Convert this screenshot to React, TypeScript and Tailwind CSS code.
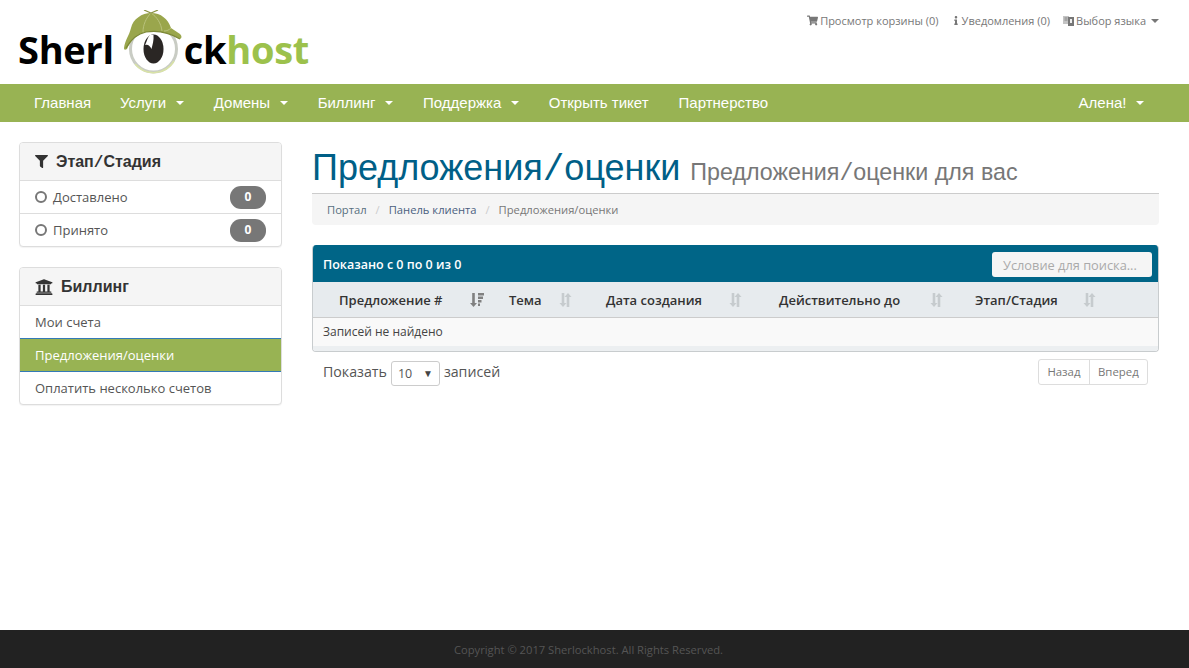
import { FaShoppingCart, FaFilter, FaUniversity, FaInfo } from "react-icons/fa";

const OPEN = "font-['Open_Sans',sans-serif]";
const ARIAL = "font-['Liberation_Sans',Arial,sans-serif]";

function Caret({ className }: { className: string }) {
  return <span className={`inline-block w-0 h-0 border-x-4 border-x-transparent border-t-4 ${className}`} />;
}

// the slash in the headings comes from a wider fallback font in the original
function Slash() {
  return <span className="font-['Liberation_Mono',monospace]">/</span>;
}

function LogoEye() {
  return (
    <svg width="58" height="64" viewBox="0 0 58 64" className="shrink-0 ml-[10px] mr-[2px]">
      <circle cx="29.5" cy="39" r="23" fill="#fff" stroke="#c9ccc4" strokeWidth="3" />
      <path d="M11 54 A 24 24 0 0 0 50 51" fill="none" stroke="#d9e3a6" strokeWidth="1.5" />
      <ellipse cx="29.5" cy="39" rx="10" ry="14.500" fill="#2a2624" />
      <path d="M26 25 C 23 28 23 32 21 35 C 24 34 26 36 27.500 39 C 28.500 35 30 30 29.500 25 Z" fill="#fff" />
      <path d="M0 38 C 1 30 5 26 7 18 C 9 9 18 3 27 3 C 37 3 44 9 47 18 L 56 24 C 58 26 58 28 56 29 C 46 23 34 20 22 22 C 12 24 6 32 3 39 C 1 40 0 40 0 38 Z" fill="#9aa64c" />
      <path d="M27 3 C 22 8 19 15 19 22 M27 3 C 33 7 37 13 38 21" fill="none" stroke="#b9c27c" strokeWidth="1" />
      <path d="M47 18 C 45 20 43 21 40 21" fill="none" stroke="#b9c27c" strokeWidth="1" />
      <path d="M2 38 C 6 31 12 24 22 22 C 34 20 46 23 56 29" fill="none" stroke="#7c8838" strokeWidth="1.2" />
      <path d="M20 0 L 27 3 L 34 0" fill="none" stroke="#8b9444" strokeWidth="1.2" />
    </svg>
  );
}

function Logo() {
  return (
    <div className={`flex items-start ${OPEN} font-bold text-[38px] leading-none tracking-[-0.3px]`}>
      <span className="text-black mt-[20px]">Sherl</span>
      <LogoEye />
      <span className="text-black mt-[20px]">ck</span>
      <span className="text-[#9cc14c] mt-[20px]">host</span>
    </div>
  );
}

function LanguageIcon() {
  return (
    <svg width="11" height="11" viewBox="0 0 11 11">
      <rect x="0" y="1" width="6" height="8" fill="#c4c4c4" />
      <rect x="5" y="2" width="6" height="9" fill="#777" />
      <rect x="7" y="4" width="2" height="4" fill="#eee" />
      <path d="M1.5 3h3M1.5 5h3" stroke="#777" strokeWidth="0.8" />
    </svg>
  );
}

function NavItem({ label, caret, right = "pr-[15px]" }: { label: string; caret?: boolean; right?: string }) {
  return (
    <span className={`flex items-center h-full pl-[15px] whitespace-nowrap ${right}`}>
      {label}
      {caret && <Caret className="border-t-white ml-[9.5px]" />}
    </span>
  );
}

function Panel({ children }: { children: React.ReactNode }) {
  return (
    <div className="border border-[#ddd] rounded-[4px] shadow-[0_1px_1px_rgba(0,0,0,0.05)] bg-white overflow-hidden">
      {children}
    </div>
  );
}

function StatusRow({ label, last }: { label: string; last?: boolean }) {
  return (
    <div className={`flex items-center px-[15px] ${last ? "h-[32px]" : "h-[33px] border-b border-[#ddd]"}`}>
      <span className="w-[12px] h-[12px] rounded-full border-2 border-[#777] mr-[6px]" />
      <span className="text-[#555] flex-1 pt-[1px]">{label}</span>
      <span className="w-[36px] h-[23px] rounded-[11px] bg-[#777] text-white text-[12px] font-bold flex items-center justify-center">0</span>
    </div>
  );
}

function SortIcon() {
  return (
    <svg width="13" height="14" viewBox="0 0 13 14" className="shrink-0">
      <path d="M2.700 0h2.600v10h2.200L4 14 .5 10h2.200z" fill="#c6cbce" />
      <path d="M7.700 14h2.600V4h2.200L9 0 5.500 4h2.200z" fill="#c6cbce" />
    </svg>
  );
}

function ActiveSortIcon() {
  return (
    <svg width="14" height="14" viewBox="0 0 14 14" className="shrink-0">
      <path d="M2.200 0h2.600v10h2.200L3.500 14 0 10h2.200z" fill="#808080" />
      <path d="M8 0h6v2.500H8zM8 3.500h5v2.500H8zM8 7h3.500v2.500H8zM8 10.500h2v2.500H8z" fill="#808080" />
    </svg>
  );
}

function HeadCell({ label, className, active }: { label: string; className: string; active?: boolean }) {
  return (
    <div className={`flex items-center justify-between whitespace-nowrap ${className}`}>
      <span className="pt-[2px]">{label}</span>
      {active ? <ActiveSortIcon /> : <SortIcon />}
    </div>
  );
}

export default function App() {
  return (
    <div className={`min-h-[668px] flex flex-col bg-white ${OPEN} text-[13px] text-[#333]`}>
      <header className="h-[84px] pl-[18px] pr-[30px] flex justify-between shrink-0">
        <div className="pt-[10px]">
          <Logo />
        </div>
        <div className="pt-[13px] flex gap-[14px] text-[11px] text-[#777] h-fit leading-[15px]">
          <span className="flex items-center gap-[2px]">
            <FaShoppingCart className="text-[11px]" />
            Просмотр корзины (0)
          </span>
          <span className="flex items-center gap-[3px]">
            <FaInfo className="text-[9px] w-[6px]" />
            Уведомления (0)
          </span>
          <span className="flex items-center gap-[2px] -ml-[1px]">
            <LanguageIcon />
            Выбор языка
            <Caret className="border-t-[#777] ml-[3px]" />
          </span>
        </div>
      </header>

      <nav className={`h-[38px] bg-[#98b353] text-white text-[15px] flex justify-between pl-[19px] pr-[30px] shrink-0 ${ARIAL}`}>
        <div className="flex items-center">
          <NavItem label="Главная" right="pr-[14px]" />
          <NavItem label="Услуги" caret />
          <NavItem label="Домены" caret />
          <NavItem label="Биллинг" caret />
          <NavItem label="Поддержка" caret />
          <NavItem label="Открыть тикет" />
          <NavItem label="Партнерство" />
        </div>
        <NavItem label="Алена!" caret />
      </nav>

      <main className="flex-1 flex gap-[30px] pl-[19px] pr-[30px] pt-[20px]">
        <aside className="w-[263px] shrink-0 flex flex-col gap-[20px]">
          <Panel>
            <div className={`h-[38px] bg-[#f5f5f5] border-b border-[#ddd] flex items-center pl-[15px] gap-[8px] text-[16px] font-bold text-[#333] ${ARIAL}`}>
              <FaFilter className="text-[13px]" />
              <span className="pt-[1px]">Этап<Slash />Стадия</span>
            </div>
            <StatusRow label="Доставлено" />
            <StatusRow label="Принято" last />
          </Panel>
          <Panel>
            <div className={`h-[38px] bg-[#f5f5f5] border-b border-[#ddd] flex items-center pl-[15px] gap-[8px] text-[16px] font-bold text-[#333] ${ARIAL}`}>
              <FaUniversity className="text-[18px]" />
              Биллинг
            </div>
            <div className="h-[33px] flex items-center pl-[15px] pt-[1px] text-[#555] border-b border-[#337ab7]">Мои счета</div>
            <div className="h-[33px] flex items-center pl-[15px] pt-[1px] text-white bg-[#98b353] border-b border-[#337ab7]">Предложения/оценки</div>
            <div className="h-[32px] flex items-center pl-[15px] pt-[1px] text-[#555]">Оплатить несколько счетов</div>
          </Panel>
        </aside>

        <section className="flex-1 min-w-0">
          <div className={`h-[52px] border-b border-[#ccc] flex items-baseline gap-[10px] whitespace-nowrap ${ARIAL}`}>
            <h1 className="text-[36px] leading-[52px] text-[#005f87]">Предложения<Slash />оценки</h1>
            <small className="text-[23.25px] text-[#777]">Предложения<Slash />оценки для вас</small>
          </div>
          <div className="h-[31px] bg-[#f5f5f5] rounded-b-[4px] flex items-center pl-[15px] pt-[1px] text-[11.2px] text-[#777]">
            <span className="text-[#58707f]">Портал</span>
            <span className="text-[#ccc] px-[9px]">/</span>
            <span className="text-[#4a5f80]">Панель клиента</span>
            <span className="text-[#ccc] px-[9px]">/</span>
            <span>Предложения/оценки</span>
          </div>

          <div className="mt-[20px] border border-[#c8ccce] border-t-0 rounded-[4px] overflow-hidden">
            <div className="h-[37px] bg-[#006587] flex items-center justify-between pl-[10px] pr-[6px] pt-[1px] text-white font-semibold text-[12.5px]">
              <span className="mt-[2px]">Показано с 0 по 0 из 0</span>
              <div className="w-[160px] h-[25px] bg-[#f5f5f5] rounded-[3px] flex items-center pl-[11px] pt-[4px] text-[#aaa] text-[12.8px] font-normal">Условие для поиска...</div>
            </div>
            <div className="h-[36px] bg-[#e7ebee] border-b border-[#ccc] flex items-center pl-[26px] font-semibold text-[13px] text-[#333]">
              <HeadCell label="Предложение #" className="w-[170px] pr-[25px]" active />
              <HeadCell label="Тема" className="w-[97px] pr-[34px]" />
              <HeadCell label="Дата создания" className="w-[173px] pr-[37px]" />
              <HeadCell label="Действительно до" className="w-[196px] pr-[32px]" />
              <HeadCell label="Этап/Стадия" className="w-[121px]" />
            </div>
            <div className="h-[28px] bg-[#f9f9f9] flex items-center pl-[10px] text-[12px] text-[#444]">Записей не найдено</div>
            <div className="h-[5px] bg-[#eceff1]" />
          </div>

          <div className="mt-[7px] pl-[11px] pr-[11px] flex items-start justify-between">
            <div className="mt-[2px] flex items-center gap-[4px] text-[14.2px] text-[#555]">
              <span className="mb-[4px]">Показать</span>
              <span className="w-[49px] h-[25px] border border-[#ccc] rounded-[3px] flex items-center justify-between pl-[6px] pr-[6px] pt-[2px] text-[12.5px] text-[#555]">
                10
                <span className="text-[10px] text-[#444] -mt-[2px]">▼</span>
              </span>
              <span className="mb-[4px]">записей</span>
            </div>
            <div className="flex h-[26px] border border-[#ddd] rounded-[3px] text-[11.4px] text-[#777]">
              <span className="px-[8.25px] flex items-center border-r border-[#ddd]">Назад</span>
              <span className="px-[8.25px] flex items-center">Вперед</span>
            </div>
          </div>
        </section>
      </main>

      <footer className="h-[38px] bg-[#222] text-[#555] text-[11.2px] flex items-center justify-center pt-[2px] pr-[12px] shrink-0">
        Copyright © 2017 Sherlockhost. All Rights Reserved.
      </footer>
    </div>
  );
}
